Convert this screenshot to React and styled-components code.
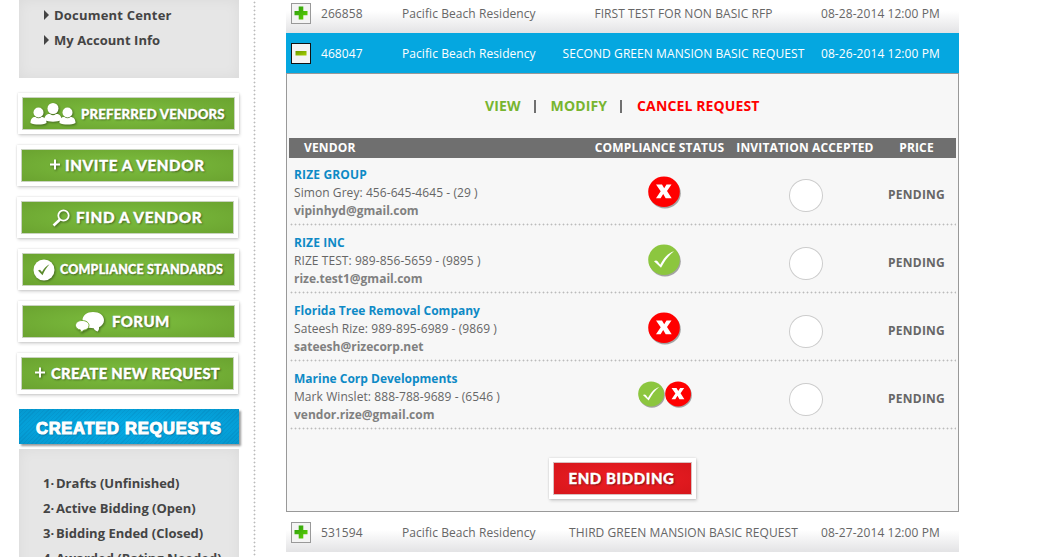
import React from "react";
import styled, { createGlobalStyle, css } from "styled-components";

const Global = createGlobalStyle`
  * { box-sizing: border-box; }
  html, body { margin: 0; background: #fff; overflow: hidden; }
  body { font-family: "Open Sans", "Liberation Sans", sans-serif; font-size: 12px; color: #666; }
`;

const Page = styled.div`
  display: flex;
  width: 1063px;
  height: 557px;
  overflow: hidden;
`;
const Sidebar = styled.aside`
  width: 253px;
  flex: none;
  padding-left: 17px;
`;
const Divider = styled.div`
  width: 3px;
  flex: none;
  margin-right: 30px;
  background: radial-gradient(circle at 1.5px 1.5px, #bbb 0.5px, transparent 1.3px) 0 1px / 3px 4px repeat-y;
`;
const Main = styled.main`
  width: 673px;
  flex: none;
`;

const MenuPanel = styled.nav`
  width: 220px;
  height: ${(p) => p.$h}px;
  margin-left: 2px;
  padding: ${(p) => p.$pad};
  background: #e6e6e6;
  box-shadow: inset 0 0 14px rgba(0, 0, 0, 0.05);
`;
const MenuItem = styled.a`
  display: flex;
  align-items: center;
  height: 25px;
  font-size: 13px;
  font-weight: 700;
  color: #444;
  white-space: nowrap;
  letter-spacing: ${(p) => p.$track || 0}px;
`;
const ItemNumber = styled.span`
  width: 13px;
`;
const Arrow = styled.i`
  border: solid transparent;
  border-width: 5px 0 5px 5px;
  border-left-color: #444;
  margin-right: 5px;
`;

const Buttons = styled.div`
  display: flex;
  flex-direction: column;
  gap: 11px;
  margin: 15px 0 15px;
`;
const frame = css`
  border: 4px solid #fff;
  box-shadow: 0 0 2px rgba(0, 0, 0, 0.16), 1px 2px 3px rgba(0, 0, 0, 0.14);
  font-family: Lato, sans-serif;
  font-weight: 900;
  color: #fff;
  white-space: nowrap;
  -webkit-text-stroke: 0.35px #fff;
`;
const SideButton = styled.a`
  ${frame}
  display: flex;
  align-items: center;
  width: 221px;
  height: 41px;
  margin-left: ${(p) => (p.$shift ? 1 : 0)}px;
  padding-left: ${(p) => p.$left}px;
  gap: ${(p) => p.$gap}px;
  background: radial-gradient(ellipse at center, #77b63a 30%, #6aa22f 100%);
  outline: 1px solid #c9d3c0;
  outline-offset: -5px;
  text-shadow: 1px 1px 2px rgba(0, 0, 0, 0.5);
  font-size: ${(p) => p.$size}px;
  letter-spacing: ${(p) => p.$track}px;
  svg { flex: none; filter: drop-shadow(1px 1px 1px rgba(0, 0, 0, 0.4)); }
`;
const ButtonLabel = styled.span`
  padding-bottom: ${(p) => (p.$raised ? 2 : 0)}px;
`;
const SideTitle = styled.h2`
  display: flex;
  align-items: center;
  width: 220px;
  height: 35px;
  margin: 0 0 5px 2px;
  padding: 3px 0 0 17px;
  background:
    repeating-linear-gradient(135deg, rgba(0, 50, 100, 0.08) 0 1px, transparent 1px 3px),
    radial-gradient(ellipse at center, #05a8e2 30%, #0598cf 100%);
  box-shadow: 2px 2px 2px rgba(0, 0, 0, 0.4);
  font: 900 16.5px "Liberation Sans", Arial, sans-serif;
  -webkit-text-stroke: 1.1px #fff;
  letter-spacing: 0.75px;
  color: #fff;
  white-space: nowrap;
  text-shadow: 1px 1px 2px rgba(0, 40, 80, 0.5);
`;

const RequestRow = styled.div`
  display: grid;
  grid-template-columns: 30px 81px 133px 286px 1fr;
  align-items: center;
  height: 40px;
  margin-top: ${(p) => p.$offset || 0}px;
  padding-left: 5px;
  font-size: 12px;
  letter-spacing: 0.07px;
  white-space: nowrap;
  color: ${(p) => (p.$active ? "#fff" : "#666")};
  background: ${(p) => (p.$active ? "#05a7e0" : "linear-gradient(#fff 45%, #e3e3e5)")};
`;
const RequestTitle = styled.span`
  padding-left: 11px;
  text-align: center;
`;
const Toggle = styled.button`
  display: flex;
  align-items: center;
  justify-content: center;
  width: 20px;
  height: 21px;
  padding: 0;
  border: 1px solid ${(p) => (p.$active ? "#111" : "#999")};
  background: #f4f4f4;
`;

const Details = styled.section`
  height: 439px;
  padding: 0 2px;
  border: 1px solid #999;
  background: #f7f7f7;
`;
const Actions = styled.div`
  display: flex;
  align-items: center;
  height: 64px;
  padding-left: 196px;
  font-size: 14px;
  font-weight: 700;
  letter-spacing: 0.12px;
  white-space: nowrap;
`;
const Action = styled.a`
  margin-top: -1px;
  color: ${(p) => (p.$danger ? "#f00" : "#77b530")};
`;
const Bar = styled.span`
  width: 2px;
  height: 13px;
  margin: 0 15px 0 13px;
  background: #707070;
`;
const columns = css`
  display: grid;
  grid-template-columns: 300px 141px 150px 76px;
`;
const TableHead = styled.div`
  ${columns}
  align-items: center;
  height: 20px;
  padding-bottom: 2px;
  background: #6f6f6f;
  color: #fff;
  font-size: 12px;
  font-weight: 700;
  letter-spacing: 0.15px;
  text-align: center;
  white-space: nowrap;
  span:first-child { text-align: left; padding-left: 15px; }
  span:last-child { padding-right: 3px; }
`;
const VendorRow = styled.div`
  ${columns}
  height: 68px;
  padding-bottom: 2px;
  background: radial-gradient(circle at 1.5px 1.5px, #bbb 0.5px, transparent 1.3px) 1px 65px / 4px 3px repeat-x;
`;
const Vendor = styled.div`
  padding: 8px 0 0 5px;
  font-size: 12px;
  line-height: 18px;
  white-space: nowrap;
`;
const VendorName = styled.div`
  font-weight: 700;
  color: #0e8ac6;
  letter-spacing: ${(p) => p.$track || 0}px;
`;
const Contact = styled.div`
  letter-spacing: 0.07px;
`;
const Email = styled.div`
  font-weight: 700;
  color: #808080;
`;
const StatusCell = styled.div`
  display: flex;
  justify-content: center;
  align-items: flex-start;
  padding: ${(p) => (p.$pair ? "19px 0 0 10px" : "18px 0 0 9px")};
`;
const InviteCell = styled.div`
  display: flex;
  justify-content: center;
  padding: 21px 0 0 1px;
`;
const Ring = styled.span`
  width: 34px;
  height: 33px;
  border: 1px solid #ccc;
  border-radius: 50%;
  background: #fff;
`;
const Price = styled.div`
  padding-top: 28px;
  padding-left: 8px;
  font-weight: 700;
  line-height: 18px;
  letter-spacing: 0.25px;
`;
const EndButton = styled.a`
  ${frame}
  display: flex;
  align-items: center;
  justify-content: center;
  width: 147px;
  height: 41px;
  margin: 28px 0 0 260px;
  padding: 0 2px 2px 0;
  background: radial-gradient(ellipse at center, #e81c22 30%, #d5161b 100%);
  outline: 1px solid #d8c0c0;
  outline-offset: -5px;
  text-shadow: 1px 1px 2px rgba(0, 0, 0, 0.5);
  font-size: 15px;
  letter-spacing: 0.6px;
`;

const PeopleIcon = () => (
  <svg width="46" height="22" viewBox="0 0 46 22" fill="#fff">
    <circle cx="8.5" cy="9.5" r="5" />
    <path d="M0.5 20c0-4 2-6.5 5-6 2 1.6 4 1.6 6 0 3 0 5 2 5 6-4 2-12 2-16 0z" />
    <circle cx="37.5" cy="9.5" r="5" />
    <path d="M29.5 20c0-4 2-6.5 5-6 2 1.6 4 1.6 6 0 3 0 5 2 5 6-4 2-12 2-16 0z" />
    <circle cx="23" cy="5.5" r="5.5" />
    <path d="M14.5 17c0-4 2-6.5 5.5-6 2 1.6 4 1.6 6 0 3.500-.5 5.500 2 5.500 6-4 2.300-13 2.300-17 0z" />
  </svg>
);
const PlusIcon = () => (
  <svg width="10" height="13" viewBox="0 0 10 13" stroke="#fff" strokeWidth="2">
    <path d="M5 .5v10M0 5.500h10" />
  </svg>
);
const SearchIcon = () => (
  <svg width="18" height="18" viewBox="0 0 18 18" fill="none" stroke="#fff">
    <circle cx="11.500" cy="6.500" r="5.200" strokeWidth="1.800" />
    <path d="M8 10.500L1.500 16.500" strokeWidth="2.600" />
  </svg>
);
const CheckDisc = () => (
  <svg width="22" height="22" viewBox="0 0 22 22">
    <circle cx="11" cy="11" r="10.500" fill="#fff" />
    <path d="M5 11.500l2-.8 2 2.300c2-3.500 4-6 7.500-7.800-3 3.300-5 6.500-7 11z" fill="#5b8a2d" />
  </svg>
);
const ChatIcon = () => (
  <svg width="30" height="22" viewBox="0 0 30 22">
    <path d="M18 1c6.500 0 11 3.500 11 8.300 0 3-2 5.500-5 7 .2 1.700-.2 3-1.300 4.200-2-.5-3.300-1.500-4-3.200C12 17.300 7.500 14 7.500 9.300 7.500 4.500 12 1 18 1z" fill="#fff" />
    <path d="M7 9.500c4 0 7 2 7 5 0 2.600-2.300 4.400-5.500 4.800-.8 1.200-2 1.800-3.500 1.700.5-.7.700-1.300.6-2C2.500 18.500.5 16.800.5 14.500c0-3 2.800-5 6.500-5z" fill="#fff" stroke="#71ac35" strokeWidth="1" />
  </svg>
);
const ToggleIcon = ({ active }) => (
  <svg width="14" height="14" viewBox="0 0 14 14">
    <defs>
      <linearGradient id={active ? "minus" : "plus"} x2="1" y2="1">
        <stop offset="0" stopColor={active ? "#6b9a00" : "#2b9a12"} />
        <stop offset="1" stopColor={active ? "#a6cf00" : "#5ed400"} />
      </linearGradient>
    </defs>
    {active ? (
      <path d="M1.500 5h11v4.500h-11z" fill="url(#minus)" />
    ) : (
      <path d="M4.700.5h4.600v4.500h4.200v4.300H9.300v4.200H4.700V9.300H.5V5h4.200z" fill="url(#plus)" />
    )}
  </svg>
);
const StatusIcon = ({ ok, size }) => (
  <svg width={size} height={size} viewBox="0 0 33 33">
    <ellipse cx="17" cy="17.300" rx="15.800" ry="15.300" fill="#777" opacity=".65" />
    <ellipse cx="16" cy="15.800" rx="15.800" ry="15.300" fill={ok ? "#8cc63f" : "#f00"} />
    {ok ? (
      <path d="M6 17.200c1.500-1 3-.8 3.800.3l2.400 3.300C15.500 14.500 19.500 9 26 7.200 20.500 11.500 17 16.500 13 23.800z" fill="#fff" />
    ) : (
      <path d="M8 8.500h6l2.200 3.800 2.300-3.800h5l-4.500 6.500 4.700 7.200h-6l-2.500-4.300-2.600 4.300H8l4.700-7z" fill="#fff" />
    )}
  </svg>
);

const sideButtons = [
  { label: "PREFERRED VENDORS", icon: <PeopleIcon />, shift: true, left: 8, gap: 5, size: 13.2, track: 0.2 },
  { label: "INVITE A VENDOR", icon: <PlusIcon />, raised: true, left: 29, gap: 5, size: 15.2, track: 0.6 },
  { label: "FIND A VENDOR", icon: <SearchIcon />, raised: true, left: 31, gap: 6, size: 15.3, track: 0.6 },
  { label: "COMPLIANCE STANDARDS", icon: <CheckDisc />, shift: true, left: 11, gap: 5, size: 12.5, track: 0.18 },
  { label: "FORUM", icon: <ChatIcon />, shift: true, raised: true, left: 53, gap: 7, size: 15, track: 0.4 },
  { label: "CREATE NEW REQUEST", icon: <PlusIcon />, raised: true, left: 14, gap: 6, size: 14.8, track: 0.3 },
];
const created = ["Drafts (Unfinished)", "Active Bidding (Open)", "Bidding Ended (Closed)", "Awarded (Rating Needed)"];
const vendors = [
  { name: "RIZE GROUP", track: 0.15, contact: "Simon Grey: 456-645-4645 - (29 )", email: "vipinhyd@gmail.com", status: [false] },
  { name: "RIZE INC", track: 0.1, contact: "RIZE TEST: 989-856-5659 - (9895 )", email: "rize.test1@gmail.com", status: [true] },
  { name: "Florida Tree Removal Company", contact: "Sateesh Rize: 989-895-6989 - (9869 )", email: "sateesh@rizecorp.net", status: [false] },
  { name: "Marine Corp Developments", contact: "Mark Winslet: 888-788-9689 - (6546 )", email: "vendor.rize@gmail.com", status: [true, false] },
];

const Request = ({ id, title, date, active, offset }) => (
  <RequestRow $active={active} $offset={offset}>
    <Toggle $active={active}><ToggleIcon active={active} /></Toggle>
    <span>{id}</span>
    <span>Pacific Beach Residency</span>
    <RequestTitle>{title}</RequestTitle>
    <span>{date}</span>
  </RequestRow>
);

export default function App() {
  return (
    <>
      <Global />
      <Page>
        <Sidebar>
          <MenuPanel $h={78} $pad="2px 0 0 25px">
            <MenuItem $track={0.2}><Arrow />Document Center</MenuItem>
            <MenuItem $track={0.05}><Arrow />My Account Info</MenuItem>
          </MenuPanel>
          <Buttons>
            {sideButtons.map((b) => (
              <SideButton key={b.label} $shift={b.shift} $left={b.left} $gap={b.gap} $size={b.size} $track={b.track}>
                {b.icon}
                <ButtonLabel $raised={b.raised}>{b.label}</ButtonLabel>
              </SideButton>
            ))}
          </Buttons>
          <SideTitle>CREATED REQUESTS</SideTitle>
          <MenuPanel $h={140} $pad="21px 0 0 24px">
            {created.map((c, i) => <MenuItem key={c}><ItemNumber>{i + 1}·</ItemNumber>{c}</MenuItem>)}
          </MenuPanel>
        </Sidebar>
        <Divider />
        <Main>
          <Request id="266858" title="FIRST TEST FOR NON BASIC RFP" date="08-28-2014 12:00 PM" offset={-7} />
          <Request id="468047" title="SECOND GREEN MANSION BASIC REQUEST" date="08-26-2014 12:00 PM" active />
          <Details>
            <Actions>
              <Action>VIEW</Action><Bar /><Action>MODIFY</Action><Bar /><Action $danger>CANCEL REQUEST</Action>
            </Actions>
            <TableHead>
              <span>VENDOR</span><span>COMPLIANCE STATUS</span><span>INVITATION ACCEPTED</span><span>PRICE</span>
            </TableHead>
            {vendors.map((v) => (
              <VendorRow key={v.name}>
                <Vendor>
                  <VendorName $track={v.track}>{v.name}</VendorName>
                  <Contact>{v.contact}</Contact>
                  <Email>{v.email}</Email>
                </Vendor>
                <StatusCell $pair={v.status.length > 1}>
                  {v.status.map((ok, i) => <StatusIcon key={i} ok={ok} size={v.status.length > 1 ? 27 : 33} />)}
                </StatusCell>
                <InviteCell><Ring /></InviteCell>
                <Price>PENDING</Price>
              </VendorRow>
            ))}
            <EndButton>END BIDDING</EndButton>
          </Details>
          <Request id="531594" title="THIRD GREEN MANSION BASIC REQUEST" date="08-27-2014 12:00 PM" />
        </Main>
      </Page>
    </>
  );
}
